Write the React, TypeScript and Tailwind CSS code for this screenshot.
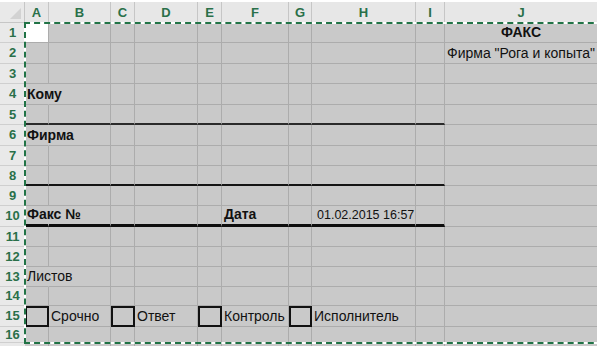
import React from 'react'

const COLS = ['A', 'B', 'C', 'D', 'E', 'F', 'G', 'H', 'I', 'J']
const ROWS = Array.from({ length: 17 }, (_, i) => i + 1)

type CellInfo = {
  text: string
  bold?: boolean
  center?: boolean
  small?: boolean
  pl?: string
}

// cell contents, keyed by address
const CELLS: Record<string, CellInfo> = {
  J1: { text: 'ФАКС', bold: true, center: true },
  J2: { text: 'Фирма "Рога и копыта"', center: true },
  A4: { text: 'Кому', bold: true },
  A6: { text: 'Фирма', bold: true },
  A10: { text: 'Факс №', bold: true },
  F10: { text: 'Дата', bold: true },
  H10: { text: '01.02.2015 16:57', small: true, pl: 'pl-[5px]' },
  A13: { text: 'Листов' },
  B15: { text: 'Срочно' },
  D15: { text: 'Ответ' },
  F15: { text: 'Контроль' },
  H15: { text: 'Исполнитель' },
}

// text that spills into the next cell hides the gridline
const SPILL = ['A4', 'A6', 'A10', 'A13']
const BOXES = ['A15', 'C15', 'E15', 'G15']

const cellClass = (col: string, row: number) => {
  const addr = `${col}${row}`
  const inForm = col !== 'J'
  let cls = 'flex items-end whitespace-nowrap leading-none text-[#111] pb-[3px] '

  if (addr === 'A1') cls += 'bg-white '
  else cls += 'bg-[#c9c9c9] '

  if (SPILL.includes(addr)) cls += 'z-10 '

  if (BOXES.includes(addr)) {
    return cls + 'border-2 border-[#111]'
  }

  cls += SPILL.includes(addr) ? 'border-r border-r-transparent ' : 'border-r border-r-[#acacac] '

  if (row === 5 && inForm) cls += 'border-b-2 border-b-[#2a2a2a]'
  else if (row === 8 && inForm) cls += 'border-b-2 border-b-[#141414]'
  else if (row === 10 && inForm) cls += 'border-b-[3px] border-b-[#0d0d0d]'
  else cls += 'border-b border-b-[#acacac]'
  return cls
}

const Cell: React.FC<{ col: string; row: number }> = ({ col, row }) => {
  const info = CELLS[`${col}${row}`]
  return (
    <div className={cellClass(col, row)}>
      {info && (
        <span
          className={
            'w-full ' +
            (info.small ? 'text-[12.5px] ' : 'text-[14px] ') +
            (info.center ? 'flex justify-center ' : (info.pl ?? 'pl-[2px]') + ' ') +
            (info.bold ? 'font-bold' : '')
          }
        >
          {info.text}
        </span>
      )}
    </div>
  )
}

export default function App() {
  return (
    <div className="relative w-[597px] h-[346px] overflow-hidden bg-white font-['Liberation_Sans',Arial,sans-serif]">
      <div className="mt-[2px] grid grid-cols-[25px_24px_62px_24px_63px_24px_67px_23px_104px_29px_153px] grid-rows-[21px_20px_21px_20px_21px_20px_21px_20px_20px_20px_21px_20px_20px_20px_19px_21px_16px_10px]">
        {/* column headers */}
        <div className="flex items-end justify-end p-[3px] bg-[#e9e9e9] border-r border-b border-[#c6c6c6]">
          <div className="w-0 h-0 border-l-[11px] border-l-transparent border-b-[11px] border-b-[#d2d2d2]" />
        </div>
        {COLS.map((c) => (
          <div
            key={c}
            className="flex items-center justify-center bg-[#e7e7e7] border-r border-[#c6c6c6] text-[13px] font-bold text-[#2a7049]"
          >
            {c}
          </div>
        ))}

        {ROWS.map((r) => (
          <React.Fragment key={r}>
            <div className="flex items-center justify-center bg-[#e9e9e9] border-b border-[#cfcfcf] text-[13px] font-bold text-[#2a7049]">
              {r <= 16 ? r : ''}
            </div>
            {COLS.map((c) => (
              <Cell key={c} col={c} row={r} />
            ))}
          </React.Fragment>
        ))}
      </div>

      {/* copy marquee round the form */}
      <div className="absolute left-[24px] top-[22px] w-[600px] h-[322px] border-2 border-white pointer-events-none z-20" />
      <div className="absolute left-[24px] top-[22px] w-[600px] h-[322px] border-2 border-dashed border-[#217346] pointer-events-none z-20" />
    </div>
  )
}
